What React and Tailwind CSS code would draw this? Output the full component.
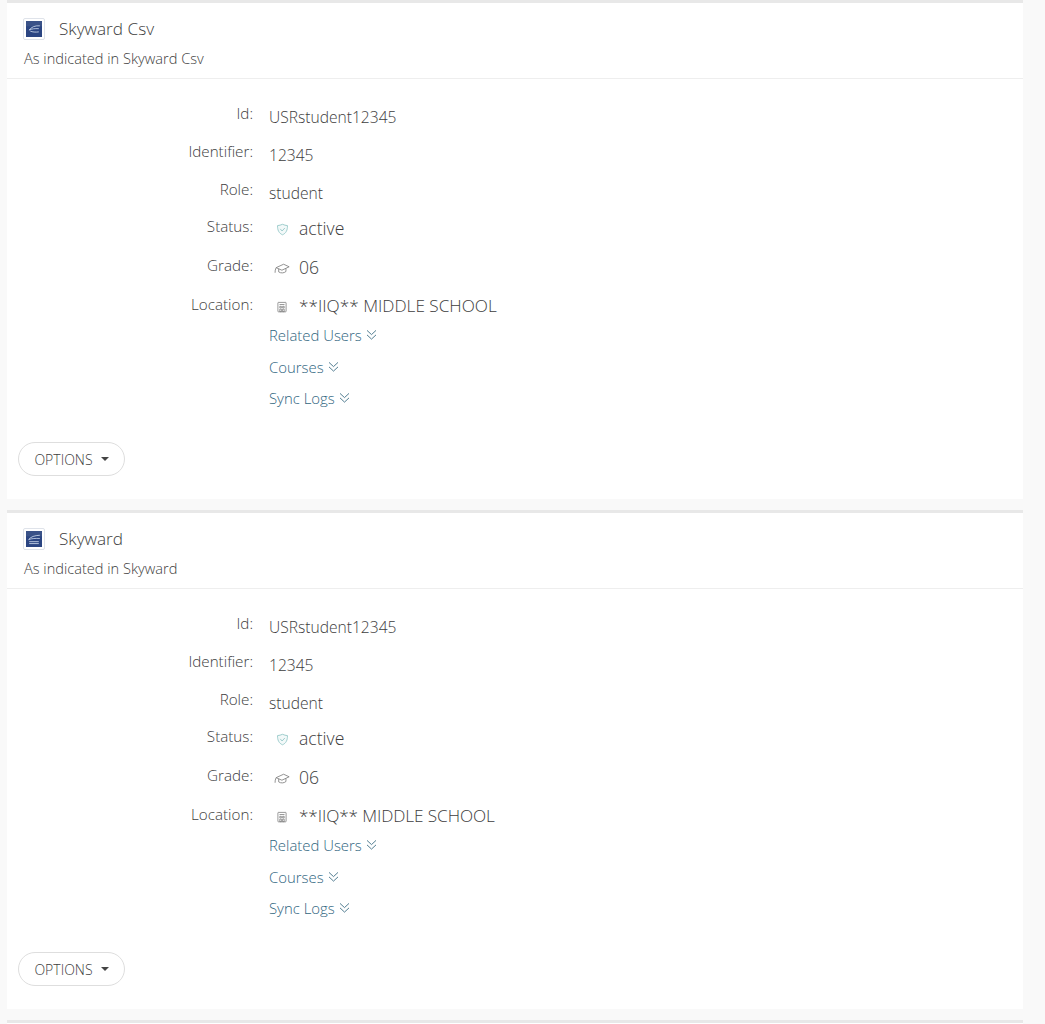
function Logo({ variant }) {
  return (
    <div className="w-[22px] h-[22px] border border-[#dfe3ea] rounded-[2px] bg-white flex items-center justify-center">
      <svg width="16" height="16" viewBox="0 0 15 15">
        <rect width="15" height="15" fill="#2b4582" />
        <rect width="15" height="5" fill="#3a5288" />
        {variant === "csv" ? (
          <path d="M13 4.5C8 4.2 5 5.8 3 8.5C5.5 7.3 8 7 12 7.2M4 9.5C6 10.4 9 10.6 12 10.2" fill="none" stroke="#c9d6ea" strokeWidth="0.8" />
        ) : (
          <path d="M13 4C8 4.2 4.5 5.4 2.5 8C5.5 7 9 6.8 13 7M3 10H12M3 11.8H12" fill="none" stroke="#c9d6ea" strokeWidth="0.8" />
        )}
      </svg>
    </div>
  );
}

function ShieldIcon() {
  return (
    <svg width="13" height="13" viewBox="0 0 12 12" fill="none" stroke="#9ccccc" strokeWidth="0.9">
      <path d="M6 1.2C7.6 2 9 2.2 10.6 2.4C10.6 6.6 9.4 9.4 6 10.9C2.6 9.4 1.4 6.6 1.4 2.4C3 2.2 4.4 2 6 1.2Z" fill="#f3f9f9" />
      <path d="M3.9 5.4L5.6 7.4L8.2 4.6" />
    </svg>
  );
}

function CapIcon() {
  return (
    <svg width="16" height="13" viewBox="0 0 15 12" fill="none" stroke="#808080" strokeWidth="0.8">
      <path d="M2 5.2L9 2L14.2 4.4L7.4 7.6Z" />
      <path d="M4.4 6.4V9.2C6.4 10.6 9.4 10.4 11.2 8.8V6" />
      <path d="M2 5.2C1.2 6.6 1 8.4 1 10" />
    </svg>
  );
}

function BuildingIcon() {
  return (
    <svg width="10" height="12" viewBox="0 0 10 11" fill="none" stroke="#808080" strokeWidth="0.8">
      <rect x="0.9" y="0.9" width="8.2" height="9.4" rx="0.5" />
      <path d="M2.5 3H7.5M2.8 4.8H4.4V6.4H2.8ZM5.6 4.8H7.2V6.4H5.6ZM2.8 7.6H4.4V10.2H2.8ZM5.6 7.6H7.2V10.2H5.6Z" />
    </svg>
  );
}

function DoubleChevron() {
  return (
    <svg width="11" height="12" viewBox="0 0 11 12" fill="none" stroke="#3f6f86" strokeWidth="0.9">
      <path d="M1 1.4L5.5 5.6L10 1.4" />
      <path d="M1 5.9L5.5 10.1L10 5.9" />
    </svg>
  );
}

function Row({ label, height, children }) {
  return (
    <div className={`flex ${height}`}>
      <div className="w-[246px] -mt-[1px] text-right text-[15.2px] font-light leading-[20px] text-[#3d3d3d]">{label}:</div>
      <div className="ml-4 mt-[3px] text-[15.6px] font-light leading-[20px] text-[#3d3d3d]">{children}</div>
    </div>
  );
}

function IconRow({ label, height, icon, text, textClass }) {
  return (
    <div className={`flex ${height}`}>
      <div className="w-[246px] -mt-[1px] text-right text-[15.2px] font-light leading-[20px] text-[#3d3d3d]">{label}:</div>
      <div className="ml-4 flex items-center h-[20px] mt-[1px]">
        <div className="w-[30px] flex justify-center pt-[2px] -translate-x-[2px]">{icon}</div>
        <span className={`font-light text-[#3d3d3d] ${textClass}`}>{text}</span>
      </div>
    </div>
  );
}

function ExpandLink({ text, height }) {
  return (
    <div className={`ml-[262px] flex items-center gap-[4px] text-[14.9px] font-light leading-[20px] text-[#2f6580] ${height}`}>
      <span>{text}</span>
      <DoubleChevron />
    </div>
  );
}

function ProfileCard({ title, variant, locationClass, locationIcon }) {
  return (
    <section className="bg-white border-t-[3px] border-[#e8e8e8] h-[499px]">
      <header className="h-[76px] border-b border-[#eeeeee] px-4 pt-[15px]">
        <div className="flex items-center h-[22px]">
          <Logo variant={variant} />
          <h2 className="ml-[14px] text-[17.2px] font-light text-[#3d3d3d]">{title}</h2>
        </div>
        <p className="mt-[8px] ml-[1px] text-[14.6px] font-light leading-[20px] text-[#3d3d3d]">As indicated in {title}</p>
      </header>
      <div className="pt-[25px]">
        <Row label="Id" height="h-[38px]">USRstudent12345</Row>
        <Row label="Identifier" height="h-[38px]">12345</Row>
        <Row label="Role" height="h-[37px]">student</Row>
        <IconRow label="Status" height="h-[39px]" icon={<ShieldIcon />} text="active" textClass="text-[17.6px]" />
        <IconRow label="Grade" height="h-[39px]" icon={<CapIcon />} text="06" textClass="text-[17.6px]" />
        <IconRow label="Location" height="h-[24px]" icon={locationIcon} text="**IIQ** MIDDLE SCHOOL" textClass={locationClass} />
        <ExpandLink text="Related Users" height="h-[32px]" />
        <ExpandLink text="Courses" height="h-[31px]" />
        <ExpandLink text="Sync Logs" height="h-[31px]" />
        <div className="mt-[29px] ml-[11px]">
          <button className="h-[34px] w-[107px] rounded-full border border-[#dedede] bg-white flex items-center justify-center gap-[8px] text-[14px] font-light text-[#3d3d3d]">
            OPTIONS
            <span className="border-x-[4px] border-t-[4px] border-x-transparent border-t-[#444]" />
          </button>
        </div>
      </div>
    </section>
  );
}

export default function App() {
  return (
    <main className="bg-[#f9f9f9] h-[1024px] overflow-hidden pl-[7px] pr-[22px] font-['Open_Sans',sans-serif]">
      <div className="flex flex-col gap-[11px]">
        <ProfileCard title="Skyward Csv" variant="csv" locationClass="text-[17.2px]" locationIcon={<BuildingIcon />} />
        <ProfileCard title="Skyward" variant="plain" locationClass="text-[17.2px] tracking-[-0.1px]" locationIcon={<BuildingIcon />} />
        <section className="bg-white border-t-[3px] border-[#e8e8e8] h-[10px]" />
      </div>
    </main>
  );
}
